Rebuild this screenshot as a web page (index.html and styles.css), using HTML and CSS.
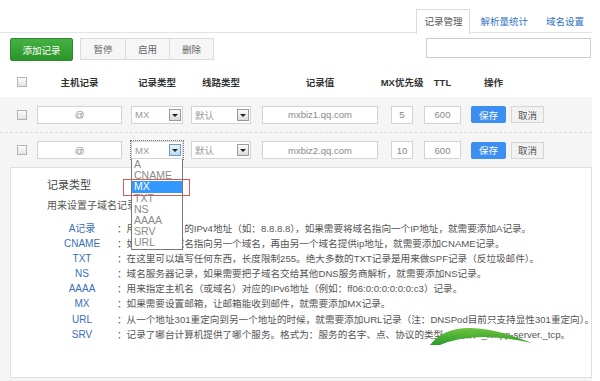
FILE: index.html
```html
<!DOCTYPE html>
<html lang="zh-CN">
<head>
  <meta charset="UTF-8" />
  <title>记录管理</title>
  <link rel="stylesheet" href="styles.css">
</head>
<body>
<div class="page">
  <div class="tabs">
    <a class="tab tab-on">记录管理</a>
    <a class="tab tab-mid">解析量统计</a>
    <a class="tab">域名设置</a>
  </div>

  <div class="toolbar">
    <button class="btn-add">添加记录</button>
    <div class="btn-group">
      <button>暂停</button><button>启用</button><button>删除</button>
    </div>
    <input class="search" type="text" />
  </div>

  <div class="cols head">
    <span class="chk"></span>
    <span class="h w-host">主机记录</span>
    <span class="h w-type">记录类型</span>
    <span class="h w-line">线路类型</span>
    <span class="h w-val">记录值</span>
    <span class="h w-mx">MX优先级</span>
    <span class="h w-ttl">TTL</span>
    <span class="h-ops">操作</span>
  </div>

  <div class="rec">
    <div class="cols row-first">
      <span class="chk"></span>
      <input class="ipt w-host" value="@" />
      <div class="sel w-type"><span>MX</span><span class="arr"></span></div>
      <div class="sel w-line"><span>默认</span><span class="arr"></span></div>
      <input class="ipt w-val" value="mxbiz1.qq.com" />
      <input class="ipt w-mx" value="5" />
      <input class="ipt w-ttl" value="600" />
      <div class="ops"><button class="btn-save">保存</button><button class="btn-cancel">取消</button></div>
    </div>

    <div class="cols row-second">
      <span class="chk"></span>
      <input class="ipt w-host" value="@" />
      <div class="sel sel-focus w-type"><span>MX</span><span class="arr"></span>
        <div class="opts">
          <div>A</div>
          <div>CNAME</div>
          <div class="opt-on">MX</div>
          <div>TXT</div>
          <div>NS</div>
          <div>AAAA</div>
          <div>SRV</div>
          <div>URL</div>
          <span class="pick"></span>
        </div>
      </div>
      <div class="sel w-line"><span>默认</span><span class="arr"></span></div>
      <input class="ipt w-val" value="mxbiz2.qq.com" />
      <input class="ipt w-mx" value="10" />
      <input class="ipt w-ttl" value="600" />
      <div class="ops"><button class="btn-save">保存</button><button class="btn-cancel">取消</button></div>
    </div>

    <div class="help">
      <div class="help-title">记录类型</div>
      <div class="help-desc">用来设置子域名记录类型</div>
      <dl class="types">
        <dt>A记录</dt><dd>：用来指定域名的IPv4地址（如：8.8.8.8），如果需要将域名指向一个IP地址，就需要添加A记录。</dd>
        <dt>CNAME</dt><dd>：如果需要将域名指向另一个域名，再由另一个域名提供ip地址，就需要添加CNAME记录。</dd>
        <dt>TXT</dt><dd>：在这里可以填写任何东西，长度限制255。绝大多数的TXT记录是用来做SPF记录（反垃圾邮件）。</dd>
        <dt>NS</dt><dd>：域名服务器记录，如果需要把子域名交给其他DNS服务商解析，就需要添加NS记录。</dd>
        <dt>AAAA</dt><dd>：用来指定主机名（或域名）对应的IPv6地址（例如：ff06:0:0:0:0:0:0:c3）记录。</dd>
        <dt>MX</dt><dd>：如果需要设置邮箱，让邮箱能收到邮件，就需要添加MX记录。</dd>
        <dt>URL</dt><dd>：从一个地址301重定向到另一个地址的时候，就需要添加URL记录（注：DNSPod目前只支持显性301重定向）。</dd>
        <dt>SRV</dt><dd>：记录了哪台计算机提供了哪个服务。格式为：服务的名字、点、协议的类型，例如：_xmpp-server._tcp。</dd>
      </dl>
    </div>
  </div>

  <svg class="mark" width="106" height="24" viewBox="0 0 106 24">
    <defs>
      <linearGradient id="g" x1="0" y1="0" x2="0" y2="1">
        <stop offset="0" stop-color="#6cc43c"/>
        <stop offset="1" stop-color="#2c9b2c"/>
      </linearGradient>
    </defs>
    <path d="M2 21 Q27 -12 104 19 Q47 6 12 21 Z" fill="url(#g)"/>
  </svg>
</div>
</body>
</html>
```

FILE: styles.css
```css
body { margin: 0; background: #fff; color: #555; font-family: "Liberation Sans", "Noto Sans CJK SC", sans-serif; font-size: 9.5px; }
button, input { font-family: inherit; font-size: 9.5px; }
.page { width: 592px; position: relative; }

/* tabs */
.tabs {
  display: flex; justify-content: flex-end; align-items: flex-start;
  height: 32px; border-bottom: 1px solid #e3e3e3;
}
.tab {
  margin-top: 9px; height: 23px; line-height: 23px; padding: 0 7px;
  color: #2f72c4; border: 1px solid transparent; border-bottom: 0;
}
.tab-mid { padding: 0 9px; }
.tab-on { background: #fff; border-color: #dcdcdc; color: #555; height: 24px; }

/* toolbar */
.toolbar { display: flex; align-items: flex-start; margin-top: 5px; padding-left: 10px; }
.btn-add {
  width: 63px; height: 23px; padding: 0; color: #fff;
  background: linear-gradient(#45b043, #2a962a); border: 1px solid #2a8c2a; border-radius: 2px;
}
.btn-group { display: flex; margin-left: 7px; border: 1px solid #dcdcdc; }
.btn-group button {
  width: 44px; height: 20px; padding: 0; background: #f6f6f6; color: #666;
  border: 0; border-left: 1px solid #dcdcdc;
}
.btn-group button:first-child { border-left: 0; }
.search {
  margin-left: auto; margin-right: 1px; width: 165px; height: 20px; box-sizing: border-box;
  border: 1px solid #ccc; background: #fff;
}

/* grid rows */
.cols {
  display: grid; align-items: center;
  grid-template-columns: 37px 85px 61px 68px 127px 35px 48px 1fr;
}
.head { margin-top: 10px; height: 22px; }
.h { display: flex; justify-content: center; justify-self: end; white-space: nowrap; font-weight: bold; color: #333; }
.h-ops { padding-left: 23px; font-weight: bold; color: #333; }
.w-host { width: 85px; }
.w-type { width: 52px; }
.w-line { width: 60px; }
.w-val { width: 116px; }
.w-mx { width: 22px; }
.w-ttl { width: 37px; }

.chk {
  margin-left: 17px; width: 10px; height: 10px; box-sizing: border-box;
  border: 1px solid #b3b3b3; background: linear-gradient(#fdfdfd, #e4e4e4);
}

.rec { margin-top: 4px; background: #f5f5f5; padding-bottom: 4px; }
.row-first { height: 35px; border-bottom: 1px dashed #dadada; }
.row-second { padding-top: 8px; }

.ipt {
  justify-self: end; height: 18px; box-sizing: border-box; padding: 0;
  border: 1px solid #d3d3d3; background: #fff; color: #888; text-align: center;
}
.sel {
  position: relative; justify-self: end; height: 18px; box-sizing: border-box;
  display: flex; align-items: center; justify-content: space-between;
  padding: 0 1px 0 3px; border: 1px solid #d3d3d3; background: #fff; color: #999;
}
.arr {
  position: relative; width: 12px; height: 12px; box-sizing: border-box;
  border: 1px solid #9a9a9a; background: linear-gradient(#fbfbfb, #dcdcdc);
}
.arr::after {
  content: ""; position: absolute; left: 2px; top: 4px;
  border-left: 3px solid transparent; border-right: 3px solid transparent; border-top: 3px solid #222;
}
.sel-focus { outline: 1px dotted #7a7a7a; }
.sel-focus .arr { border-color: #6c9ec4; background: linear-gradient(#e8f4fc, #b9dcf2); }

.ops { display: flex; gap: 5px; padding-left: 10px; }
.btn-save { width: 35px; height: 17px; padding: 0; border: 0; border-radius: 2px; background: #3d8ef2; color: #fff; }
.btn-cancel { width: 33px; height: 17px; padding: 0; border: 1px solid #d5d5d5; background: #f2f2f2; color: #555; }

/* open dropdown */
.opts {
  position: absolute; left: -1px; top: calc(100% + 1px); z-index: 2;
  width: 52px; box-sizing: border-box; background: #fff;
  border: 1px solid #777; border-top: 0;
  font-size: 10.5px; color: #8a8a8a;
}
.opts div { height: 11.2px; line-height: 11.2px; padding-left: 2px; }
.opts .opt-on { background: #3399ff; color: #fff; }
.pick {
  position: absolute; left: -9px; top: 20px; width: 67px; height: 17px; box-sizing: border-box;
  border: 1px solid #d25a5a;
}

/* help panel */
.help {
  margin: 8px 0 0 10px; height: 211px; box-sizing: border-box;
  padding: 9px 0 0 36px; border: 1px solid #e0e0e0; background: #fff;
}
.help-title { font-size: 11px; line-height: 16px; color: #444; }
.help-desc { margin-top: 5px; font-size: 10px; line-height: 16px; color: #555; }
.types {
  display: grid; grid-template-columns: 70px auto; grid-auto-rows: 15.1px;
  margin: 7px 0 0; font-size: 10px; line-height: 15.1px;
}
.types dt { text-align: center; color: #3a6fb8; }
.types dd { margin: 0; white-space: nowrap; color: #555; font-size: 9.6px; }

.mark { position: absolute; left: 428px; top: 324px; pointer-events: none; }
```
